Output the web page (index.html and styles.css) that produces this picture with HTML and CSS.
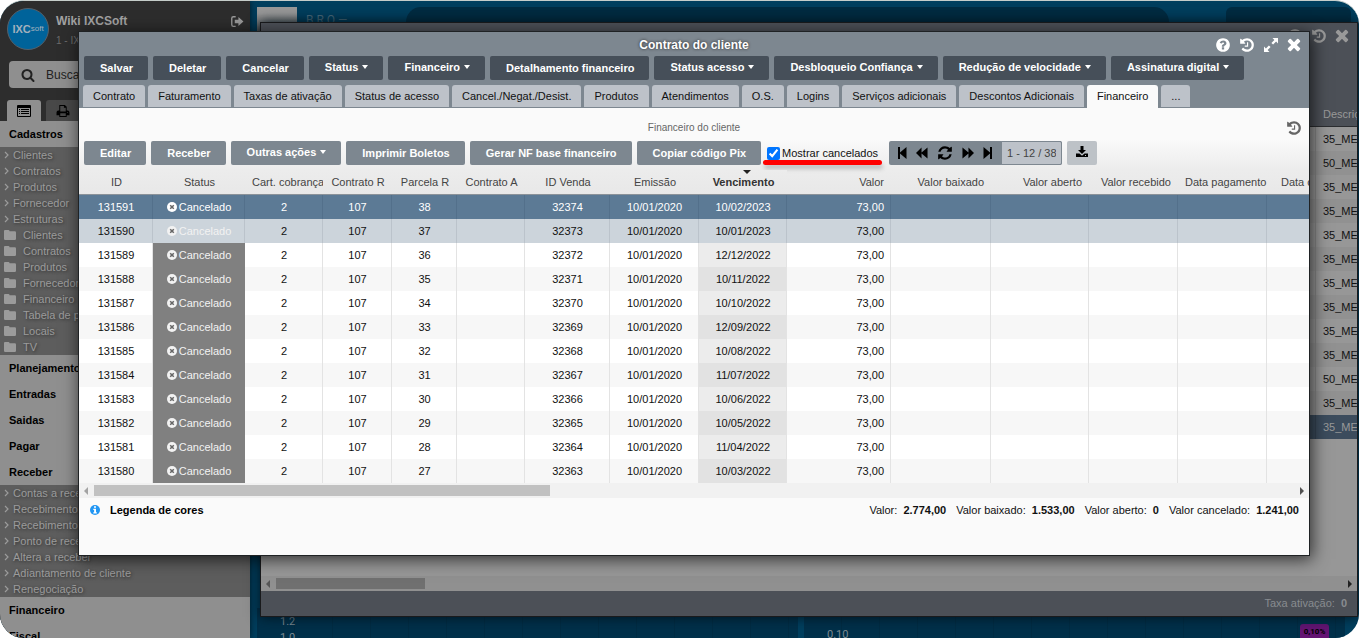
FILE: index.html
```
<!DOCTYPE html>
<html lang="pt-BR">

<head>
    <meta charset="utf-8">
    <title>Wiki IXCSoft</title>
    <link rel="stylesheet" href="styles.css">
</head>

<body>
<svg class="sprite">
    <symbol id="i-help" viewBox="0 0 1792 1792"><path d="M1024 1376v-192q0-14-9-23t-23-9h-192q-14 0-23 9t-9 23v192q0 14 9 23t23 9h192q14 0 23-9t9-23zm256-672q0-88-55.5-163t-138.5-116-170-41q-243 0-371 213-15 24 8 42l132 100q7 6 19 6 16 0 25-12 53-68 86-92 34-24 86-24 48 0 85.5 26t37.5 59q0 38-20 61t-68 45q-63 28-115.5 86.5t-52.5 125.5v36q0 14 9 23t23 9h192q14 0 23-9t9-23q0-19 21.5-49.5t54.5-49.5q32-18 49-28.5t46-35 44.5-48 28-60.5 12.5-81zm384 192q0 209-103 385.5t-279.5 279.5-385.5 103-385.5-103-279.5-279.5-103-385.5 103-385.5 279.5-279.5 385.5-103 385.5 103 279.5 279.5 103 385.5z"/></symbol>
    <symbol id="i-history" viewBox="0 0 1792 1792"><path d="M1664 896q0 156-61 298t-164 245-245 164-298 61q-172 0-327-72.5t-264-204.5q-7-10-6.5-22.5t8.5-20.5l137-138q10-9 25-9 16 2 23 12 73 95 179 147t225 52q104 0 198.5-40.5t163.5-109.5 109.5-163.5 40.5-198.5-40.5-198.5-109.5-163.5-163.5-109.5-198.5-40.5q-98 0-188 35.5t-160 101.5l137 138q31 30 14 69-17 40-59 40h-448q-26 0-45-19t-19-45v-448q0-42 40-59 39-17 69 14l130 129q107-101 244.5-156.5t284.5-55.5q156 0 298 61t245 164 164 245 61 298zm-640-288v448q0 14-9 23t-23 9h-320q-14 0-23-9t-9-23v-64q0-14 9-23t23-9h224v-352q0-14 9-23t23-9h64q14 0 23 9t9 23z"/></symbol>
    <symbol id="i-close" viewBox="224 356 1344 1344"><path transform="translate(0 68)" d="M1490 1322q0 40-28 68l-136 136q-28 28-68 28t-68-28l-294-294-294 294q-28 28-68 28t-68-28l-136-136q-28-28-28-68t28-68l294-294-294-294q-28-28-28-68t28-68l136-136q28-28 68-28t68 28l294 294 294-294q28-28 68-28t68 28l136 136q28 28 28 68t-28 68l-294 294 294 294q28 28 28 68z"/></symbol>
    <symbol id="i-search" viewBox="0 0 1792 1792"><path d="M1216 832q0-185-131.5-316.5t-316.5-131.5-316.5 131.5-131.5 316.5 131.5 316.5 316.5 131.5 316.5-131.5 131.5-316.5zm512 832q0 52-38 90t-90 38q-54 0-90-38l-343-342q-179 124-399 124-143 0-273.5-55.5t-225-150-150-225-55.5-273.5 55.5-273.5 150-225 225-150 273.5-55.5 273.5 55.5 225 150 150 225 55.5 273.5q0 220-124 399l343 343q37 37 37 90z"/></symbol>
    <symbol id="i-refresh" viewBox="0 0 1792 1792"><path d="M1639 1056q0 5-1 7-64 268-268 434.5t-478 166.5q-146 0-282.5-55t-243.5-157l-129 129q-19 19-45 19t-45-19-19-45v-448q0-26 19-45t45-19h448q26 0 45 19t19 45-19 45l-137 137q71 66 161 102t187 36q134 0 250-65t186-179q11-17 53-117 8-23 30-23h192q13 0 22.5 9.5t9.5 22.5zm25-800v448q0 26-19 45t-45 19h-448q-26 0-45-19t-19-45 19-45l138-138q-148-137-349-137-134 0-250 65t-186 179q-11 17-53 117-8 23-30 23h-199q-13 0-22.5-9.5t-9.5-22.5v-7q65-268 270-434.5t480-166.5q146 0 284 55.5t245 156.5l130-129q19-19 45-19t45 19 19 45z"/></symbol>
    <symbol id="i-expand" viewBox="0 0 16 16"><path d="M9.500 1H15v5.500l-1.900-1.900-3 3-1.700-1.700 3-3zM6.500 15H1V9.500l1.900 1.900 3-3 1.700 1.700-3 3z"/></symbol>
    <symbol id="i-exit" viewBox="0 0 14 12"><path d="M5 0v1.500H2.500Q1.500 1.500 1.500 2.500v7q0 1 1 1H5V12H2.500Q0 12 0 9.500v-7Q0 0 2.500 0zM8 1l5.500 5L8 11V8H4V4h4z"/></symbol>
    <symbol id="i-list" viewBox="0 0 14 12"><path fill-rule="evenodd" d="M1 0h12q1 0 1 1v10q0 1-1 1H1q-1 0-1-1V1q0-1 1-1zM1 3v8h12V3zM2 4h1v1H2zM4 4h8v1H4zM2 6h1v1H2zM4 6h8v1H4zM2 8h1v1H2zM4 8h8v1H4z"/></symbol>
    <symbol id="i-print" viewBox="0 0 14 13"><path fill-rule="evenodd" d="M3 0h6l2 2v4h1q2 0 2 2v3h-3v2H3v-2H0V8q0-2 2-2h1zM4 1v6h6V3H8V1zM4 9v3h6V9zM11.500 7.500v1h1v-1z"/></symbol>
    <symbol id="i-folder" viewBox="0 0 12 10"><path d="M1 0h3.500q1 0 1 1.200h5.300q1.200 0 1.200 1.200v6.400q0 1.200-1.200 1.200H1.200Q0 10 0 8.800V1q0-1 1-1z"/></symbol>
    <symbol id="i-angle" viewBox="0 0 5 8"><path d="M1 1l3 3-3 3" fill="none" stroke="currentColor" stroke-width="1.200"/></symbol>
    <symbol id="i-cancel" viewBox="0 0 10 10"><circle cx="5" cy="5" r="5"/><path class="cut" d="M3.200 3.200l3.600 3.600M6.800 3.200L3.200 6.800"/></symbol>
    <symbol id="i-info" viewBox="0 0 10 10"><circle cx="5" cy="5" r="5"/><path fill="#fff" d="M4 1.200h2v1.600H4zM3.300 3.700H6v3.500h.8v1.200H3.300V7.200h.8V4.900h-.8z"/></symbol>
    <symbol id="i-first" viewBox="0 0 9 12"><path d="M0 0h2v5.500L8.500 0v12L2 6.500V12H0z"/></symbol>
    <symbol id="i-prev" viewBox="0 0 13 12"><path d="M6 0v5.500L12.500 0v12L6 6.500V12L0 6z"/></symbol>
    <symbol id="i-download" viewBox="0 0 12 12"><path fill-rule="evenodd" d="M4.500 0h3v4H10L6 8 2 4h2.500zM0 7.500h3.500L6 9.800l2.500-2.300H12V11H0zM9 9v1h1V9z"/></symbol>
</svg>

<div class="app">
    <aside class="sidebar">
        <header class="user">
            <div class="avatar"><b>IXC</b><span>soft</span></div>
            <div class="user-name">
                <strong>Wiki IXCSoft</strong>
                <small>1 - IXC</small>
            </div>
            <a href="#" class="exit" aria-label="Sair"><svg><use href="#i-exit"/></svg></a>
        </header>
        <label class="search">
            <svg><use href="#i-search"/></svg>
            <input type="text" placeholder="Buscar" aria-label="Buscar">
        </label>
        <div class="side-tabs">
            <button class="active" aria-label="Menu"><svg><use href="#i-list"/></svg></button>
            <button aria-label="Imprimir"><svg><use href="#i-print"/></svg></button>
        </div>
        <nav class="menu">
            <h3>Cadastros</h3>
            <ul>
                <li><svg class="angle"><use href="#i-angle"/></svg><a href="#">Clientes</a></li>
                <li><svg class="angle"><use href="#i-angle"/></svg><a href="#">Contratos</a></li>
                <li><svg class="angle"><use href="#i-angle"/></svg><a href="#">Produtos</a></li>
                <li><svg class="angle"><use href="#i-angle"/></svg><a href="#">Fornecedor</a></li>
                <li><svg class="angle"><use href="#i-angle"/></svg><a href="#">Estruturas</a></li>
                <li><svg class="folder"><use href="#i-folder"/></svg><a href="#">Clientes</a></li>
                <li><svg class="folder"><use href="#i-folder"/></svg><a href="#">Contratos</a></li>
                <li><svg class="folder"><use href="#i-folder"/></svg><a href="#">Produtos</a></li>
                <li><svg class="folder"><use href="#i-folder"/></svg><a href="#">Fornecedor</a></li>
                <li><svg class="folder"><use href="#i-folder"/></svg><a href="#">Financeiro</a></li>
                <li><svg class="folder"><use href="#i-folder"/></svg><a href="#">Tabela de preços</a></li>
                <li><svg class="folder"><use href="#i-folder"/></svg><a href="#">Locais</a></li>
                <li><svg class="folder"><use href="#i-folder"/></svg><a href="#">TV</a></li>
            </ul>
            <h3>Planejamento</h3>
            <h3>Entradas</h3>
            <h3>Saidas</h3>
            <h3>Pagar</h3>
            <h3>Receber</h3>
            <ul>
                <li><svg class="angle"><use href="#i-angle"/></svg><a href="#">Contas a receber</a></li>
                <li><svg class="angle"><use href="#i-angle"/></svg><a href="#">Recebimento</a></li>
                <li><svg class="angle"><use href="#i-angle"/></svg><a href="#">Recebimento</a></li>
                <li><svg class="angle"><use href="#i-angle"/></svg><a href="#">Ponto de recebimento</a></li>
                <li><svg class="angle"><use href="#i-angle"/></svg><a href="#">Altera a receber</a></li>
                <li><svg class="angle"><use href="#i-angle"/></svg><a href="#">Adiantamento de cliente</a></li>
                <li><svg class="angle"><use href="#i-angle"/></svg><a href="#">Renegociação</a></li>
            </ul>
            <h3>Financeiro</h3>
            <h3>Fiscal</h3>
        </nav>
    </aside>

    <main class="dashboard">
        <div class="banner">
            <div class="logo"></div>
            <span>B R O —</span>
            <div class="pill"></div>
            <div class="box"></div>
        </div>
        <div class="charts">
            <div class="chart">
                <span>1.2</span>
                <span>1.0</span>
            </div>
            <div class="chart late">
                <span>0.10</span>
                <b class="badge">0,10%</b>
            </div>
        </div>
    </main>

    <!-- lista de contratos, atrás -->
    <section class="window back">
        <header class="back-head">
            <div class="titlebar">
                <h2>Contrato do cliente</h2>
                <div class="win-icons">
                    <button aria-label="Ajuda"><svg><use href="#i-help"/></svg></button>
                    <button aria-label="Histórico"><svg><use href="#i-history"/></svg></button>
                    <button aria-label="Fechar"><svg class="x"><use href="#i-close"/></svg></button>
                </div>
            </div>
        </header>
        <table class="back-grid">
            <thead><tr><th></th><th class="desc">Descrição</th></tr></thead>
            <tbody>
                <tr><td></td><td>35_ME</td></tr>
                <tr><td></td><td>50_ME</td></tr>
                <tr><td></td><td>35_ME</td></tr>
                <tr><td></td><td>35_ME</td></tr>
                <tr><td></td><td>35_ME</td></tr>
                <tr><td></td><td>35_ME</td></tr>
                <tr><td></td><td>35_ME</td></tr>
                <tr><td></td><td>35_ME</td></tr>
                <tr><td></td><td>35_ME</td></tr>
                <tr><td></td><td>35_ME</td></tr>
                <tr><td></td><td>50_ME</td></tr>
                <tr><td></td><td>35_ME</td></tr>
                <tr class="selected"><td></td><td>35_ME</td></tr>
            </tbody>
        </table>
        <div class="back-bottom">
            <div class="scrollbar"><i class="arrow left"></i><div class="track"><div class="thumb"></div></div><i class="arrow right"></i></div>
            <footer>Taxa ativação: <b>0</b></footer>
        </div>
    </section>

    <!-- contrato do cliente -->
    <section class="window front">
        <header class="front-head">
            <div class="titlebar">
                <h2>Contrato do cliente</h2>
                <div class="win-icons">
                    <button aria-label="Ajuda"><svg><use href="#i-help"/></svg></button>
                    <button aria-label="Histórico"><svg><use href="#i-history"/></svg></button>
                    <button aria-label="Expandir"><svg><use href="#i-expand"/></svg></button>
                    <button aria-label="Fechar"><svg class="x"><use href="#i-close"/></svg></button>
                </div>
            </div>
            <div class="toolbar dark">
                <button>Salvar</button>
                <button>Deletar</button>
                <button>Cancelar</button>
                <button class="drop">Status</button>
                <button class="drop">Financeiro</button>
                <button>Detalhamento financeiro</button>
                <button class="drop">Status acesso</button>
                <button class="drop">Desbloqueio Confiança</button>
                <button class="drop">Redução de velocidade</button>
                <button class="drop">Assinatura digital</button>
            </div>
            <nav class="tabs">
                <a href="#">Contrato</a>
                <a href="#">Faturamento</a>
                <a href="#">Taxas de ativação</a>
                <a href="#">Status de acesso</a>
                <a href="#">Cancel./Negat./Desist.</a>
                <a href="#">Produtos</a>
                <a href="#">Atendimentos</a>
                <a href="#">O.S.</a>
                <a href="#">Logins</a>
                <a href="#">Serviços adicionais</a>
                <a href="#">Descontos Adicionais</a>
                <a href="#" class="active">Financeiro</a>
                <a href="#">...</a>
            </nav>
        </header>

        <div class="panel">
            <div class="panel-title">
                <span>Financeiro do cliente</span>
                <button aria-label="Histórico"><svg><use href="#i-history"/></svg></button>
            </div>
            <div class="toolbar">
                <button>Editar</button>
                <button>Receber</button>
                <button class="drop">Outras ações</button>
                <button>Imprimir Boletos</button>
                <button>Gerar NF base financeiro</button>
                <button>Copiar código Pix</button>
                <label class="check"><input type="checkbox" checked>Mostrar cancelados</label>
                <div class="pager">
                    <button aria-label="Primeira"><svg class="first"><use href="#i-first"/></svg></button>
                    <button aria-label="Anterior"><svg class="step"><use href="#i-prev"/></svg></button>
                    <button aria-label="Atualizar"><svg class="refresh"><use href="#i-refresh"/></svg></button>
                    <button aria-label="Próxima"><svg class="step flip"><use href="#i-prev"/></svg></button>
                    <button aria-label="Última"><svg class="first flip"><use href="#i-first"/></svg></button>
                    <input type="text" value="1 - 12 / 38" aria-label="Registros" readonly>
                </div>
                <button class="download" aria-label="Baixar"><svg><use href="#i-download"/></svg></button>
            </div>
        </div>

        <div class="grid-wrap">
            <table class="grid">
                <colgroup>
                    <col class="w74"><col class="w92"><col class="w78"><col class="w69"><col class="w65"><col class="w68"><col class="w85"><col class="w89"><col class="w88"><col class="w104"><col class="w100"><col class="w98"><col class="w89"><col class="w89"><col>
                </colgroup>
                <thead>
                    <tr>
                        <th>ID</th><th>Status</th><th class="l">Cart. cobrança</th><th>Contrato R</th><th>Parcela R</th><th>Contrato A</th><th>ID Venda</th><th>Emissão</th><th class="sort">Vencimento</th><th class="r">Valor</th><th class="r">Valor baixado</th><th class="r">Valor aberto</th><th class="r">Valor recebido</th><th class="l">Data pagamento</th><th class="last">Data cancelamento</th>
                    </tr>
                </thead>
                <tbody>
                    <tr class="selected"><td>131591</td><td class="st"><svg><use href="#i-cancel"/></svg>Cancelado</td><td>2</td><td>107</td><td>38</td><td></td><td>32374</td><td>10/01/2020</td><td class="due">10/02/2023</td><td class="r">73,00</td><td></td><td></td><td></td><td></td><td></td></tr>
                    <tr class="hover"><td>131590</td><td class="st"><svg><use href="#i-cancel"/></svg>Cancelado</td><td>2</td><td>107</td><td>37</td><td></td><td>32373</td><td>10/01/2020</td><td class="due">10/01/2023</td><td class="r">73,00</td><td></td><td></td><td></td><td></td><td></td></tr>
                    <tr><td>131589</td><td class="st"><svg><use href="#i-cancel"/></svg>Cancelado</td><td>2</td><td>107</td><td>36</td><td></td><td>32372</td><td>10/01/2020</td><td class="due">12/12/2022</td><td class="r">73,00</td><td></td><td></td><td></td><td></td><td></td></tr>
                    <tr><td>131588</td><td class="st"><svg><use href="#i-cancel"/></svg>Cancelado</td><td>2</td><td>107</td><td>35</td><td></td><td>32371</td><td>10/01/2020</td><td class="due">10/11/2022</td><td class="r">73,00</td><td></td><td></td><td></td><td></td><td></td></tr>
                    <tr><td>131587</td><td class="st"><svg><use href="#i-cancel"/></svg>Cancelado</td><td>2</td><td>107</td><td>34</td><td></td><td>32370</td><td>10/01/2020</td><td class="due">10/10/2022</td><td class="r">73,00</td><td></td><td></td><td></td><td></td><td></td></tr>
                    <tr><td>131586</td><td class="st"><svg><use href="#i-cancel"/></svg>Cancelado</td><td>2</td><td>107</td><td>33</td><td></td><td>32369</td><td>10/01/2020</td><td class="due">12/09/2022</td><td class="r">73,00</td><td></td><td></td><td></td><td></td><td></td></tr>
                    <tr><td>131585</td><td class="st"><svg><use href="#i-cancel"/></svg>Cancelado</td><td>2</td><td>107</td><td>32</td><td></td><td>32368</td><td>10/01/2020</td><td class="due">10/08/2022</td><td class="r">73,00</td><td></td><td></td><td></td><td></td><td></td></tr>
                    <tr><td>131584</td><td class="st"><svg><use href="#i-cancel"/></svg>Cancelado</td><td>2</td><td>107</td><td>31</td><td></td><td>32367</td><td>10/01/2020</td><td class="due">11/07/2022</td><td class="r">73,00</td><td></td><td></td><td></td><td></td><td></td></tr>
                    <tr><td>131583</td><td class="st"><svg><use href="#i-cancel"/></svg>Cancelado</td><td>2</td><td>107</td><td>30</td><td></td><td>32366</td><td>10/01/2020</td><td class="due">10/06/2022</td><td class="r">73,00</td><td></td><td></td><td></td><td></td><td></td></tr>
                    <tr><td>131582</td><td class="st"><svg><use href="#i-cancel"/></svg>Cancelado</td><td>2</td><td>107</td><td>29</td><td></td><td>32365</td><td>10/01/2020</td><td class="due">10/05/2022</td><td class="r">73,00</td><td></td><td></td><td></td><td></td><td></td></tr>
                    <tr><td>131581</td><td class="st"><svg><use href="#i-cancel"/></svg>Cancelado</td><td>2</td><td>107</td><td>28</td><td></td><td>32364</td><td>10/01/2020</td><td class="due">11/04/2022</td><td class="r">73,00</td><td></td><td></td><td></td><td></td><td></td></tr>
                    <tr><td>131580</td><td class="st"><svg><use href="#i-cancel"/></svg>Cancelado</td><td>2</td><td>107</td><td>27</td><td></td><td>32363</td><td>10/01/2020</td><td class="due">10/03/2022</td><td class="r">73,00</td><td></td><td></td><td></td><td></td><td></td></tr>
                </tbody>
            </table>
        </div>
        <div class="scrollbar"><i class="arrow left"></i><div class="track"><div class="thumb"></div></div><i class="arrow right"></i></div>
        <footer class="totals">
            <a href="#" class="legend"><svg><use href="#i-info"/></svg>Legenda de cores</a>
            <span>Valor: <b>2.774,00</b></span>
            <span>Valor baixado: <b>1.533,00</b></span>
            <span>Valor aberto: <b>0</b></span>
            <span>Valor cancelado: <b>1.241,00</b></span>
        </footer>
    </section>
</div>
</body>

</html>
```
FILE: styles.css
```
* {
  box-sizing: border-box;
}

body {
  margin: 0;
  background: #fff;
  font: 11px/16px "Liberation Sans", Arial, sans-serif;
  color: #111;
}

a {
  color: inherit;
  text-decoration: none;
}

button,
input {
  font: inherit;
  color: inherit;
}

button {
  border: 0;
  padding: 0;
  background: none;
  cursor: pointer;
}

svg {
  display: block;
  fill: currentColor;
}

.sprite {
  display: none;
}

h2,
h3,
ul {
  margin: 0;
  padding: 0;
}

.app {
  position: relative;
  display: flex;
  height: 100vh;
  overflow: hidden;
  border-top: 1px solid #c5cdca;
  border-radius: 24px;
  background: #003f5e;
}

/* Sidebar */
.sidebar {
  width: 250px;
  flex: none;
  background: #2d2d2d;
  box-shadow: 0 0 6px #001824;
  z-index: 1;
}

.user {
  display: flex;
  height: 60px;
  padding: 7px 6px 0 7px;
}

.avatar {
  display: flex;
  align-items: center;
  justify-content: center;
  width: 42px;
  height: 42px;
  border: 1px solid #55606a;
  border-radius: 50%;
  background: #00639a;
  color: #a3b1bc;
  font-size: 8px;
}

.avatar b {
  font-size: 11px;
}

.user-name {
  flex: 1;
  padding: 5px 0 0 7px;
  color: #a2a2a2;
}

.user-name strong {
  display: block;
  font-size: 12px;
}

.user-name small {
  display: block;
  padding-top: 4px;
  font-size: 10px;
  color: #6b6b6b;
}

.exit {
  padding-top: 8px;
  color: #999;
}

.exit svg {
  width: 13px;
  height: 11px;
}

.search {
  display: flex;
  align-items: center;
  height: 27px;
  margin: 0 9px;
  padding-left: 12px;
  border-radius: 4px;
  background: #8f8f8f;
  color: #222;
}

.search svg {
  width: 14px;
  height: 14px;
  margin-right: 11px;
}

.search input {
  flex: 1;
  min-width: 0;
  border: 0;
  padding: 0;
  background: none;
  font-size: 12px;
}

.search input::placeholder {
  color: #222;
}

.side-tabs {
  display: flex;
  gap: 5px;
  padding: 12px 7px 0;
}

.side-tabs button {
  display: flex;
  align-items: center;
  justify-content: center;
  width: 34px;
  height: 21px;
  border-radius: 3px 3px 0 0;
  background: #484848;
  color: #000;
}

.side-tabs button.active {
  background: #8f8f8f;
}

.side-tabs svg {
  width: 14px;
  height: 12px;
}

.menu h3 {
  height: 26px;
  padding-left: 9px;
  background: #8f8f8f;
  color: #000;
  font-size: 11px;
  line-height: 26px;
}

.menu ul {
  list-style: none;
  background: #5d5d5d;
  color: #9b9b9b;
  text-shadow: 1px 1px 3px #333;
}

.menu li {
  display: flex;
  align-items: center;
  height: 16px;
  padding-left: 4px;
  white-space: nowrap;
}

.angle {
  width: 5px;
  height: 8px;
  margin-right: 4px;
}

.folder {
  width: 12px;
  height: 10px;
  margin-right: 7px;
}

/* Dashboard */
.dashboard {
  display: flex;
  flex: 1;
  flex-direction: column;
  justify-content: space-between;
  padding: 6px 8px 0 7px;
}

.banner {
  display: flex;
  height: 30px;
  gap: 9px;
  color: #4b6b7c;
  font: 12px/26px Roboto, sans-serif;
}

.logo {
  width: 40px;
  background: linear-gradient(#999 20%, #555);
}

.pill {
  flex: 1;
  margin-left: 50px;
  border-radius: 20px;
  background: #002c42;
}

.box {
  width: 125px;
  margin-left: 48px;
  border-radius: 6px;
  background: #002c42;
}

.charts {
  display: flex;
  gap: 6px;
  margin-right: 6px;
  height: 30px;
  color: #7d8a92;
  font: 11px/16px Roboto, sans-serif;
}

.chart {
  position: relative;
  flex: 1;
  padding: 6px 23px 0;
  background: repeating-linear-gradient(90deg, #00304a 0 37px, #002c44 37px 38px);
}

.chart span {
  display: block;
}

.chart.late {
  padding-top: 19px;
}

.badge {
  position: absolute;
  right: 16px;
  bottom: 0;
  width: 29px;
  height: 14px;
  border-radius: 3px 3px 0 0;
  background: #641473;
  color: #000;
  font-size: 8px;
  text-align: center;
}

/* Windows */
.window {
  position: absolute;
  z-index: 2;
  display: flex;
  flex-direction: column;
  overflow: hidden;
}

.titlebar {
  position: relative;
  height: 24px;
}

.titlebar h2 {
  font-size: 12px;
  line-height: 26px;
  text-align: center;
}

.win-icons {
  position: absolute;
  top: 5px;
  right: 8px;
  display: flex;
  align-items: center;
  gap: 8px;
}

.win-icons svg {
  width: 16px;
  height: 16px;
}

.win-icons svg.x {
  width: 14px;
  height: 14px;
}

.back {
  top: 21px;
  right: 1px;
  bottom: 21px;
  left: 260px;
  border: 1px solid #191a1c;
  background: #979797;
  box-shadow: 0 0 12px #00121c;
}

.back-head {
  height: 78px;
  background: #4c5057;
  color: #999;
}

.back-grid {
  width: 100%;
  table-layout: fixed;
  border-collapse: separate;
  border-spacing: 0;
  white-space: nowrap;
}

.back-grid th,
.back-grid td {
  overflow: hidden;
  text-align: left;
}

.back-grid th {
  height: 26px;
  padding: 0 0 0 7px;
  border-bottom: 1px solid #2b2d30;
  background: #4c5057;
  color: #999;
  font-weight: normal;
}

.back-grid .desc {
  width: 41px;
}

.back-grid td {
  height: 24px;
  padding: 0 0 0 7px;
  border-right: 1px solid #868686;
}

.back-grid td:last-child {
  border-right: 0;
}

.back-grid tbody tr:nth-child(even) td {
  background: #919191;
}

.back-grid tbody .selected td {
  border-color: #344252;
  background: #3c4c5d;
  color: #999;
}

.back-bottom {
  margin-top: auto;
}

.back-bottom footer {
  height: 25px;
  padding-right: 10px;
  background: #4c5057;
  color: #888c90;
  line-height: 25px;
  text-align: right;
}

.back-bottom b {
  margin-left: 3px;
}

.front {
  top: 30px;
  right: 49px;
  left: 78px;
  height: 525px;
  border: 1px solid #1f2224;
  background: #fafafa;
  box-shadow: 2px 3px 16px rgba(0, 0, 0, .7);
}

.front-head {
  background: #7d8790;
  border-bottom: 1px solid #7d8790;
}

.front-head .titlebar {
  color: #fff;
}

.front-head h2 {
  text-shadow: 0 0 3px #222;
}

.toolbar {
  display: flex;
  gap: 5px;
  padding-left: 5px;
  white-space: nowrap;
}

.toolbar > button {
  height: 24px;
  padding: 0 15px 0 16px;
  border-radius: 2px;
  background: #7d8790;
  color: #fff;
  font-weight: bold;
}

.dark > button {
  background: #464f59;
}

.toolbar > .drop {
  padding-bottom: 2px;
}

.drop::after {
  content: "";
  display: inline-block;
  margin-left: 4px;
  vertical-align: 2px;
  border: 3px solid transparent;
  border-top: 4px solid #fff;
  border-bottom: 0;
}

.tabs {
  display: flex;
  gap: 3px;
  padding: 5px 4px 0;
  white-space: nowrap;
}

.tabs a {
  height: 22px;
  padding: 0 10px;
  border-radius: 3px 3px 0 0;
  background: #bdc2c9;
  line-height: 22px;
}

.tabs a.active {
  height: 23px;
  margin-bottom: -1px;
  background: #fafafa;
}

.panel {
  height: 62px;
  background: linear-gradient(#fafafa 50%, #ececec);
}

.panel-title {
  position: relative;
  height: 33px;
  color: #666;
  font-size: 10px;
  line-height: 40px;
  text-align: center;
}

.panel-title button {
  position: absolute;
  top: 12px;
  right: 7px;
}

.panel-title svg {
  width: 16px;
  height: 16px;
}

.check {
  position: relative;
  display: flex;
  align-items: center;
  margin-left: 1px;
}

.check input {
  width: 13px;
  height: 13px;
  margin: 0 2px 0 0;
}

.check::after {
  content: "";
  position: absolute;
  right: -4px;
  bottom: 0;
  left: -4px;
  height: 5px;
  border-radius: 3px;
  background: #f00;
  box-shadow: 1px 4px 4px #bbb;
}

.pager {
  display: flex;
  align-items: center;
  width: 173px;
  height: 24px;
  margin-left: 6px;
  padding-left: 9px;
  border-radius: 2px;
  background: #7d8790;
  color: #000;
}

.pager button {
  margin-right: 9px;
}

.pager .first {
  width: 9px;
  height: 12px;
}

.pager .step {
  width: 12px;
  height: 12px;
}

.pager .refresh {
  width: 16px;
  height: 16px;
}

.flip {
  transform: scaleX(-1);
}

.pager input {
  flex: 1;
  min-width: 0;
  height: 24px;
  border: 1px solid #7d8790;
  border-radius: 0 2px 2px 0;
  padding: 0 5px;
  background: #bdc2c9;
  color: #444;
}

.toolbar > .download {
  width: 30px;
  padding: 0 9px 2px;
  background: #bdc2c7;
  color: #000;
}

.download svg {
  width: 12px;
  height: 12px;
}

/* Grid */
.grid-wrap {
  overflow: hidden;
}

.grid {
  width: 100%;
  table-layout: fixed;
  border-collapse: separate;
  border-spacing: 0;
  white-space: nowrap;
}

.w74 { width: 74px; }
.w92 { width: 92px; }
.w78 { width: 78px; }
.w69 { width: 69px; }
.w65 { width: 65px; }
.w68 { width: 68px; }
.w85 { width: 85px; }
.w89 { width: 89px; }
.w88 { width: 88px; }
.w104 { width: 104px; }
.w100 { width: 100px; }
.w98 { width: 98px; }

.grid th,
.grid td {
  height: 24px;
  padding: 0 0 0 1px;
  overflow: hidden;
  text-align: center;
}

.grid th {
  height: 25px;
  border-bottom: 1px solid #8b9299;
  background: linear-gradient(#ececec, #e8e8e8);
  color: #444;
  font-weight: normal;
}

.grid td {
  border-right: 1px solid #e3e3e3;
  background: #fff;
}

.grid tr > :last-child {
  border-right: 0;
}

.grid tr:nth-child(even) td {
  background: #f7f7f7;
}

.grid td.r {
  padding-right: 6px;
  text-align: right;
}

.grid th.r {
  padding-right: 7px;
  text-align: right;
}

.grid .l {
  padding-left: 7px;
  text-align: left;
}

.grid .last {
  padding-left: 14px;
  text-align: left;
}

.grid .sort {
  position: relative;
  color: #333;
  font-weight: bold;
}

.sort::before {
  content: "";
  position: absolute;
  top: 0;
  left: 50%;
  border: 4px solid transparent;
  border-top-color: #222;
  border-bottom: 0;
}

.grid tbody .due {
  background: #ececec;
}

.grid tr:nth-child(even) .due {
  background: #e2e2e2;
}

.grid tbody .st,
.grid tr:nth-child(even) .st {
  border-color: #808080;
  background: #808080;
  color: #f2f2f2;
}

.st svg {
  display: inline-block;
  width: 10px;
  height: 10px;
  margin-right: 2px;
  vertical-align: -1px;
}

.cut {
  fill: none;
  stroke: #666;
  stroke-width: 1.5;
}

.grid tbody tr.selected > td {
  border-color: #53708b;
  background: #5c7a95;
  color: #fff;
}

.grid tbody tr.hover:nth-child(even) > td {
  border-color: #bbc3cb;
  background: #ccd4db;
}

/* Scrollbar */
.scrollbar {
  display: flex;
  align-items: center;
  height: 15px;
  padding: 0 5px;
  background: #f1f1f1;
}

.track {
  flex: 1;
  padding: 0 6px;
}

.thumb {
  width: 38%;
  height: 11px;
  background: #c1c1c1;
}

.arrow {
  border: 4px solid transparent;
}

.arrow.left {
  border-left: 0;
  border-right-color: #a3a3a3;
}

.arrow.right {
  border-right: 0;
  border-left-color: #505050;
}

.back .scrollbar {
  background: #909090;
}

.back .thumb {
  width: 14%;
  background: #707070;
}

.back .arrow.left {
  border-right-color: #555;
}

.back .arrow.right {
  border-left-color: #222;
}

.totals {
  display: flex;
  gap: 10px;
  padding: 4px 10px;
}

.totals b {
  margin-left: 3px;
}

.legend {
  display: flex;
  align-items: center;
  gap: 10px;
  margin-right: auto;
  padding-left: 1px;
  color: #000;
  font-weight: bold;
}

.legend svg {
  width: 10px;
  height: 10px;
  color: #2196f3;
}
```
